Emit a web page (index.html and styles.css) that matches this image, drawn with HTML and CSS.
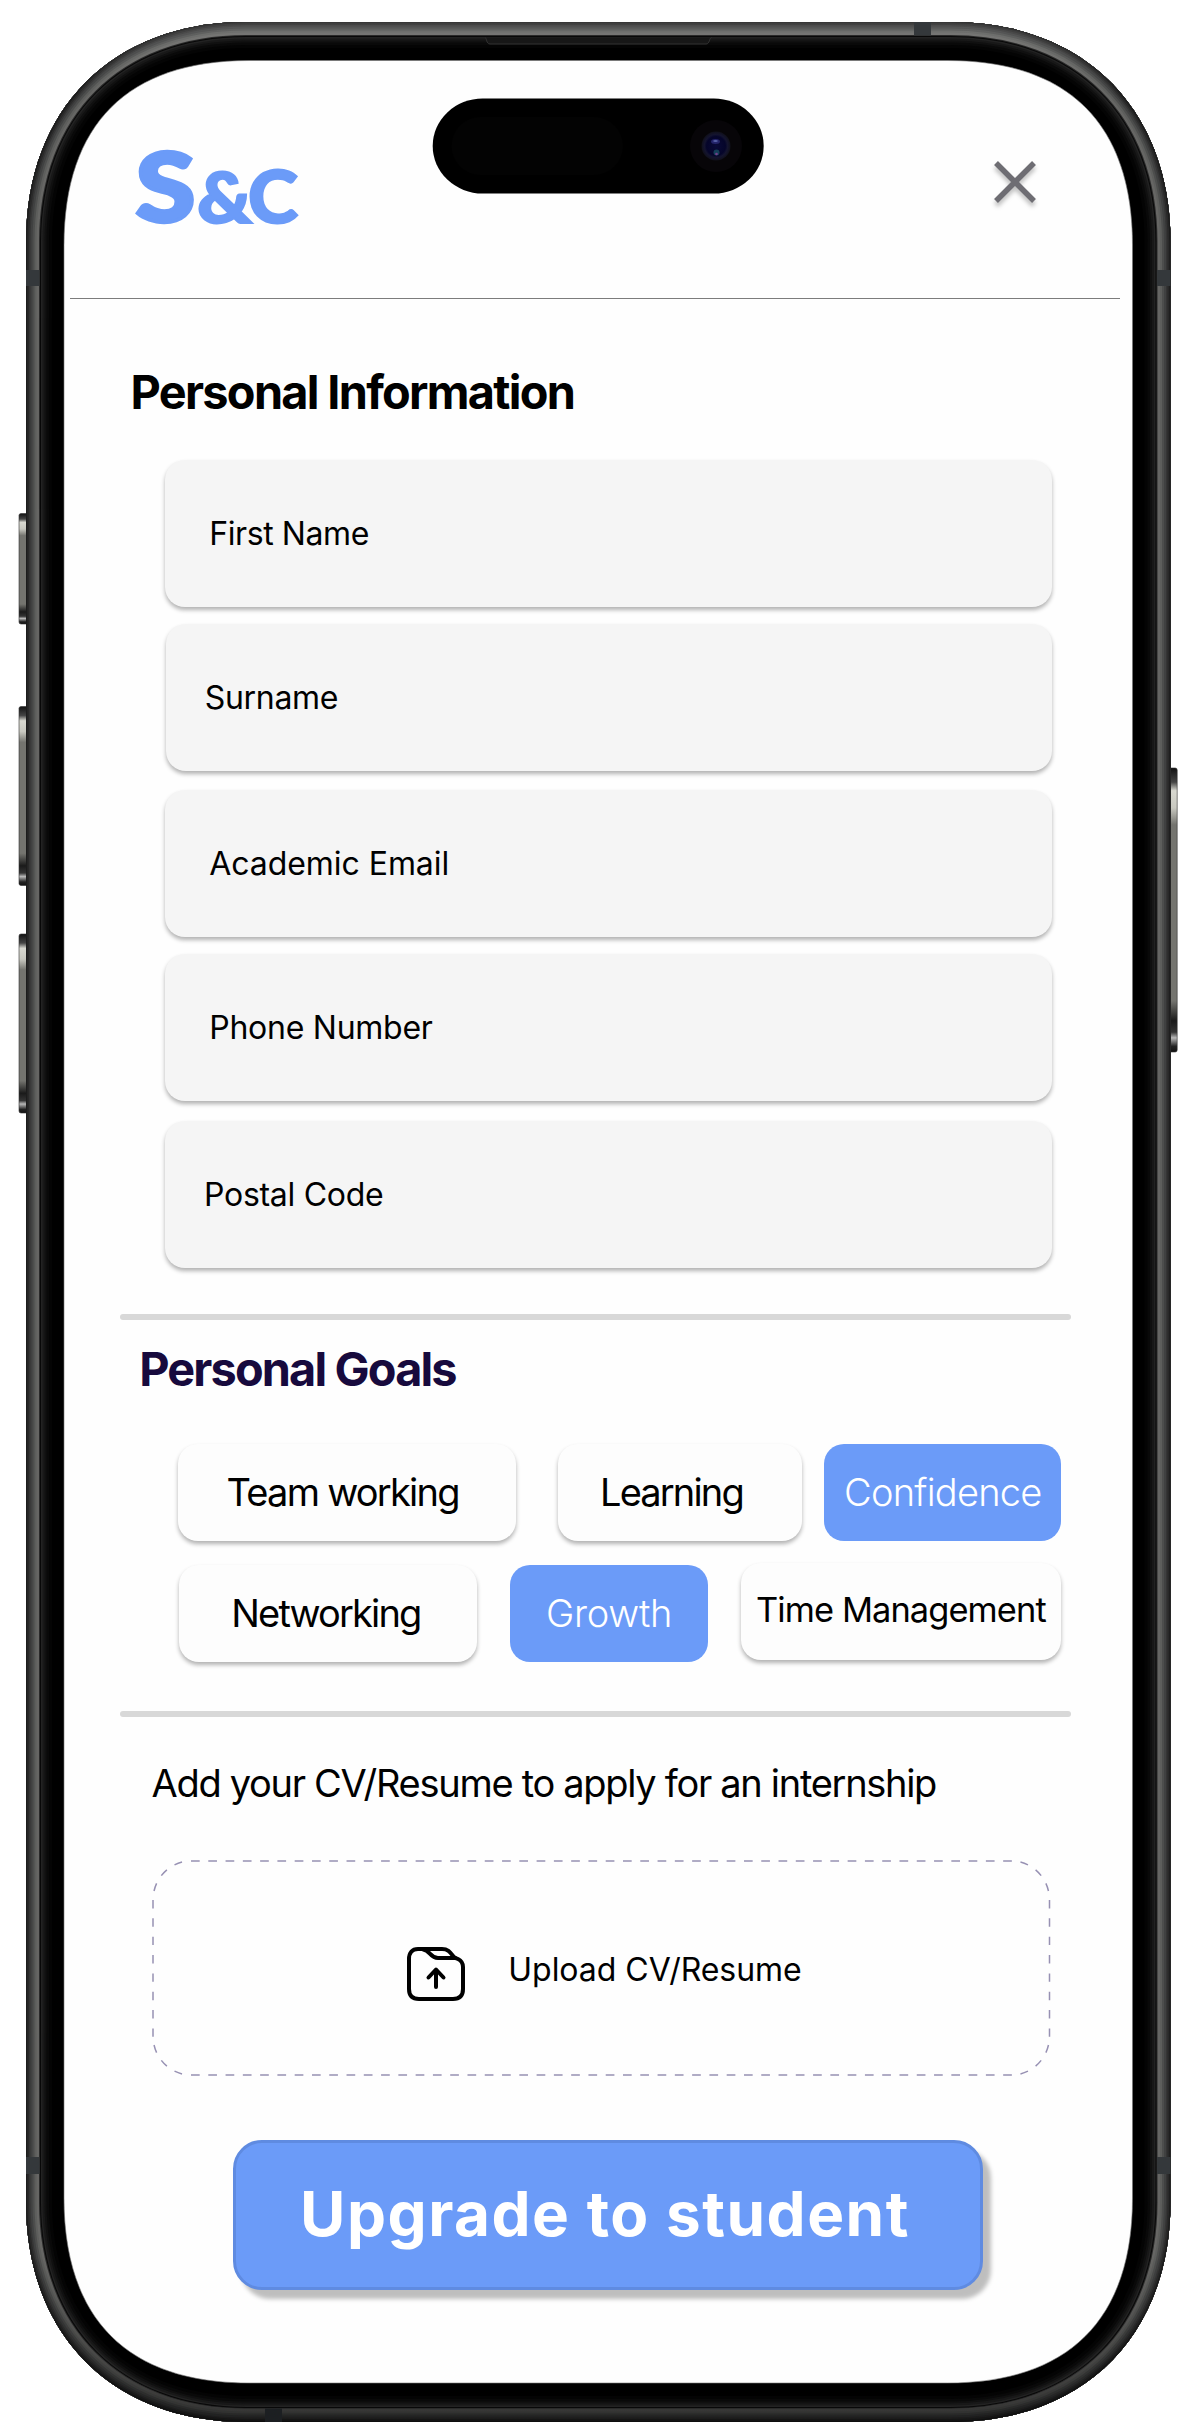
FILE: index.html
```html
<!DOCTYPE html>
<html lang="en">
<head>
<meta charset="utf-8">
<title>Upgrade to student</title>
<link rel="stylesheet" href="styles.css">
</head>
<body>
<div class="device">
  <svg class="frame" width="1196" height="2433" viewBox="0 0 1196 2433" aria-hidden="true">
    <defs>
      <path id="body" d="M246 22H950.500C1083.820 22 1170.500 108.680 1170.500 242V2202C1170.500 2335.320 1083.820 2422 950.500 2422H246C112.680 2422 26 2335.320 26 2202V242C26 108.680 112.680 22 246 22Z"/>
      <clipPath id="bodyClip"><use href="#body"/></clipPath>
      <linearGradient id="shade" x1="0" y1="0" x2="0" y2="1">
        <stop offset="0" stop-color="#fff" stop-opacity=".12"/>
        <stop offset=".03" stop-color="#fff" stop-opacity="0"/>
        <stop offset=".93" stop-color="#000" stop-opacity="0"/>
        <stop offset="1" stop-color="#000" stop-opacity=".5"/>
      </linearGradient>
      <linearGradient id="key" x1="0" y1="0" x2="0" y2="1">
        <stop offset="0" stop-color="#111"/>
        <stop offset=".05" stop-color="#444"/>
        <stop offset=".08" stop-color="#d8d8d0"/>
        <stop offset=".14" stop-color="#c8c8c0"/>
        <stop offset=".2" stop-color="#74746f"/>
        <stop offset=".82" stop-color="#74746f"/>
        <stop offset=".89" stop-color="#1a1a1a"/>
        <stop offset=".93" stop-color="#333"/>
        <stop offset=".95" stop-color="#b8b8b8"/>
        <stop offset=".98" stop-color="#222"/>
        <stop offset="1" stop-color="#111"/>
      </linearGradient>
      <radialGradient id="lens">
        <stop offset="0" stop-color="#0a0a38"/>
        <stop offset=".65" stop-color="#05052a"/>
        <stop offset=".8" stop-color="#14142f"/>
        <stop offset="1" stop-color="#10101a"/>
      </radialGradient>
    </defs>
    <g fill="url(#key)" stroke="#333" stroke-width=".6">
      <rect x="19" y="513.500" width="9" height="110.500" rx="2"/>
      <rect x="19" y="706.500" width="9" height="179" rx="2"/>
      <rect x="19" y="934" width="9" height="179" rx="2"/>
      <rect x="1168" y="768" width="9.200" height="284" rx="2"/>
    </g>
    <use href="#body" fill="#000"/>
    <g clip-path="url(#bodyClip)" fill="none">
      <use href="#body" stroke="#040404" stroke-width="52"/>
      <use href="#body" stroke="#090909" stroke-width="46"/>
      <use href="#body" stroke="#101010" stroke-width="41"/>
      <use href="#body" stroke="#181818" stroke-width="37"/>
      <use href="#body" stroke="#222" stroke-width="33"/>
      <use href="#body" stroke="#080808" stroke-width="30"/>
      <use href="#body" stroke="#2a2a2a" stroke-width="28"/>
      <use href="#body" stroke="#666664" stroke-width="26"/>
      <use href="#body" stroke="#5d5e5c" stroke-width="21"/>
      <use href="#body" stroke="#4d4e4d" stroke-width="17"/>
      <use href="#body" stroke="#404141" stroke-width="13"/>
      <use href="#body" stroke="#353535" stroke-width="9"/>
      <use href="#body" stroke="#292929" stroke-width="6"/>
      <use href="#body" stroke="#1c1c1c" stroke-width="2.500"/>
      <use href="#body" stroke="url(#shade)" stroke-width="26"/>
      <g fill="#34383b">
        <rect x="26" y="270" width="13.500" height="16"/>
        <rect x="1157" y="270" width="14" height="16"/>
        <rect x="914" y="22" width="17" height="13.500"/>
        <rect x="26" y="2157" width="13.500" height="17"/>
        <rect x="1157" y="2157" width="14" height="17"/>
        <rect x="265" y="2408.500" width="17" height="14" fill="#1c1f22"/>
      </g>
    </g>
    <path d="M485 37.500C487 38 486 44 490 44H706C710 44 709 38 711.500 37.500" fill="#171717" stroke="#333" stroke-width="1"/>
    <path d="M249 60.500H947.500C1068.860 60.500 1132.500 124.140 1132.500 245.500V2198C1132.500 2319.360 1068.860 2383 947.500 2383H249C127.640 2383 64 2319.360 64 2198V245.500C64 124.140 127.640 60.500 249 60.500Z" fill="#fefefe" stroke="#777" stroke-width=".6"/>
    <rect x="432.700" y="98.500" width="331" height="95" rx="50" ry="47.500" fill="#000"/>
    <rect x="451.500" y="117" width="171.500" height="58" rx="29" fill="#030303"/>
    <circle cx="716" cy="146" r="26" fill="#070508"/>
    <circle cx="716" cy="146" r="14.500" fill="url(#lens)"/>
    <ellipse cx="715.500" cy="141.500" rx="4.500" ry="2.500" fill="#24246a"/>
    <ellipse cx="715.500" cy="141" rx="2.300" ry="1.100" fill="#5860a8"/>
    <circle cx="716.500" cy="152.500" r="3" fill="#143e58"/>
    <circle cx="716.500" cy="154" r="1.300" fill="#74408a"/>
  </svg>

  <div class="screen">
    <header class="header">
      <svg class="logo" width="166" height="80" viewBox="0 0 166 80" role="img" aria-label="S&amp;c">
        <text class="logo-s" x="1.500" y="73" font-size="96" textLength="60" lengthAdjust="spacingAndGlyphs">S</text>
        <text x="63" y="73.500" font-size="71" textLength="55" lengthAdjust="spacingAndGlyphs">&amp;</text>
        <text x="114" y="73.500" font-size="72" textLength="50" lengthAdjust="spacingAndGlyphs">C</text>
      </svg>
      <button class="close" aria-label="Close">
        <svg width="42" height="42" viewBox="0 0 42 42"><path d="M2 2L40 40M40 2L2 40"/></svg>
      </button>
    </header>

    <section class="info">
      <h2 class="title title-info">Personal Information</h2>
      <div class="field"><span class="t-first">First Name</span></div>
      <div class="field field-b"><span class="t-surname">Surname</span></div>
      <div class="field field-c"><span class="t-email">Academic Email</span></div>
      <div class="field field-d"><span class="t-phone">Phone Number</span></div>
      <div class="field field-e"><span class="t-postal">Postal Code</span></div>
    </section>

    <section class="goals">
      <h2 class="title title-goals">Personal Goals</h2>
      <div class="chips chips-top">
        <span class="chip chip-team">Team working</span>
        <span class="chip chip-learning">Learning</span>
        <span class="chip chip-confidence on">Confidence</span>
      </div>
      <div class="chips chips-bottom">
        <span class="chip chip-networking">Networking</span>
        <span class="chip chip-growth on">Growth</span>
        <span class="chip chip-time">Time Management</span>
      </div>
    </section>

    <section class="cv">
      <p class="lead">Add your CV/Resume to apply for an internship</p>
      <div class="upload">
        <svg class="outline" width="900" height="216" viewBox="0 0 900 216" aria-hidden="true">
          <g class="dash-h"><path d="M39 1H860"/><path d="M39 215H860"/></g>
          <g class="dash-v"><path d="M1 40V177"/><path d="M897.500 40V177"/></g>
          <g class="dash-c">
            <path d="M1 40A38 39 0 0 1 39 1"/><path d="M897.500 40A38 39 0 0 0 859.500 1"/>
            <path d="M1 176A38 39 0 0 0 39 215"/><path d="M897.500 176A38 39 0 0 1 859.500 215"/>
          </g>
        </svg>
        <svg class="folder" width="58" height="54" viewBox="0 0 58 54" aria-hidden="true">
          <path d="M11 2H35C41 2 43 5 46 9C47.500 11 49 11 51 12C54 13.500 56 16 56 20V42C56 48 53 52 46 52H12C5 52 2 48 2 42V12C2 6 5 2 11 2Z"/>
          <path d="M16 2.500C23 3 23 11 31 11H48"/>
          <path d="M29 40V23M21.500 30.500L29 22.500L36.500 30.500"/>
        </svg>
        <span class="upload-text">Upload CV/Resume</span>
      </div>
    </section>

    <button class="submit"><span>Upgrade to student</span></button>
  </div>
</div>
</body>
</html>
```
FILE: styles.css
```css
* { box-sizing: border-box; }

body {
  margin: 0;
  background: #fff;
  color: #000;
  font-family: Inter, "Liberation Sans", sans-serif;
}

.device {
  position: relative;
  width: 1196px;
  height: 2433px;
  overflow: hidden;
}

.frame {
  position: absolute;
  inset: 0;
}

.screen {
  position: relative;
  display: flex;
  flex-direction: column;
  padding: 0 76px 0 70px;
}

button {
  border: 0;
  padding: 0;
  background: none;
  font-family: inherit;
}

.header {
  display: flex;
  justify-content: space-between;
  align-items: flex-start;
  height: 299px;
  padding: 149px 84px 0 64px;
  border-bottom: 1px solid #7c7c7c;
}

.logo {
  overflow: visible;
  fill: #6b9bf8;
  stroke: #6b9bf8;
  stroke-width: 2;
  font-family: Lato, "Liberation Sans", sans-serif;
  font-weight: 900;
}

.logo-s { stroke-width: 3.5; }

.close {
  margin-top: 12px;
  height: 42px;
  filter: drop-shadow(0 4px 2px rgba(0, 0, 0, .25));
}

.close svg { display: block; }

.close path {
  stroke: #6e6d73;
  stroke-width: 5.5;
}

.title {
  margin: 0;
  font-size: 46.8px;
  line-height: 56px;
  font-weight: 700;
  white-space: nowrap;
}

.title-info {
  padding-left: 60.5px;
  letter-spacing: -1.68px;
}

.info {
  padding: 65px 0 46px;
}

.info .title { margin-bottom: 40px; }

.field {
  display: flex;
  align-items: center;
  width: 887.5px;
  height: 147px;
  margin-left: 94.5px;
  padding-left: 44.7px;
  border-radius: 20px;
  background: #f5f5f5;
  box-shadow: 0 3px 4px rgba(0, 0, 0, .3);
  font-size: 32px;
  white-space: nowrap;
}

.field-b { margin-top: 17px; margin-left: 95.5px; width: 886.5px; padding-left: 39.2px; }
.field-c { margin-top: 19px; }
.field-d { margin-top: 17px; }
.field-e { margin-top: 20px; padding-left: 39.6px; }

.t-first { letter-spacing: -.4px; }
.t-surname { letter-spacing: -.3px; }
.t-email { letter-spacing: -.05px; }
.t-phone { letter-spacing: -.25px; }
.t-postal { letter-spacing: -.3px; }

.goals, .cv {
  position: relative;
}

.goals::before, .cv::before {
  content: "";
  display: block;
  width: 951px;
  height: 5.500px;
  margin-left: 49.7px;
  border-radius: 3px;
  background: #d8d8d8;
}

.title-goals {
  margin-top: 21.5px;
  padding-left: 69.2px;
  color: #170a3d;
  letter-spacing: -1.83px;
}

.chips {
  display: flex;
  align-items: flex-start;
  margin-left: 108px;
}

.chips-top { margin-top: 47px; }
.chips-bottom { margin-top: 24.5px; }

.chip {
  display: flex;
  align-items: center;
  flex: none;
  height: 96.5px;
  border-radius: 20px;
  background: #fdfdfd;
  box-shadow: 0 3px 4px rgba(0, 0, 0, .3);
  font-size: 38px;
  font-weight: 400;
  white-space: nowrap;
}

.chip.on {
  background: #6b9bf8;
  box-shadow: none;
  color: #fff;
  font-weight: 300;
}

.chip-team { width: 337.5px; padding-left: 48.5px; letter-spacing: -1.75px; }
.chip-learning { width: 244px; margin-left: 42.5px; padding-left: 42px; letter-spacing: -1.85px; }
.chip-confidence { width: 236.5px; margin-left: 22px; padding-left: 20px; letter-spacing: -.75px; }
.chip-networking { width: 298px; margin-left: .5px; padding-left: 52.8px; letter-spacing: -1.85px; }
.chip-growth { width: 198px; margin-left: 33.5px; padding-left: 36px; letter-spacing: -.3px; }
.chip-time {
  width: 320px;
  margin: -2px 0 0 33px;
  padding: 0 0 4px 15px;
  font-size: 34.4px;
  letter-spacing: -.9px;
}

.cv { margin-top: 49.5px; }

.lead {
  margin: 43.7px 0 54px;
  padding-left: 81.5px;
  font-size: 38px;
  line-height: 46px;
  font-weight: 400;
  letter-spacing: -1.3px;
  white-space: nowrap;
}

.upload {
  position: relative;
  display: flex;
  width: 900px;
  height: 216px;
  margin-left: 82px;
  padding: 87px 0 0 255px;
}

.outline {
  position: absolute;
  inset: 0;
  fill: none;
  stroke: #9791b3;
  stroke-width: 1.5;
}

.dash-h { stroke-dasharray: 8.7 8.58; }
.dash-v { stroke-dasharray: 8.4 9.95; }
.dash-c { stroke-dasharray: 0 9.1 8 9.1 8 9.1 8 9.1; }

.folder {
  flex: none;
  fill: none;
  stroke: #000;
  stroke-width: 4;
  stroke-linecap: round;
  stroke-linejoin: round;
}

.upload-text {
  margin: 3px 0 0 43.3px;
  font-size: 32px;
  line-height: 40px;
  font-weight: 400;
  letter-spacing: -.03px;
  white-space: nowrap;
}

.submit {
  display: flex;
  align-items: center;
  width: 750px;
  height: 150px;
  margin: 64px 0 0 163px;
  padding: 0 0 4px 64px;
  border: 3px solid #5f8be1;
  border-radius: 29px;
  background: #6b9bf8;
  box-shadow: 8px 9px 4px rgba(0, 0, 0, .25);
  color: #fff;
  font-size: 62px;
  font-weight: 700;
  letter-spacing: 1.5px;
  white-space: nowrap;
}
```
